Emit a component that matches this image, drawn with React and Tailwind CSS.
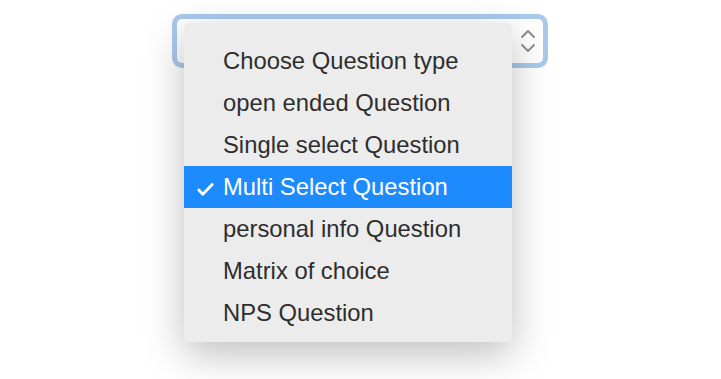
import React from 'react';

const options = [
    'Choose Question type',
    'open ended Question',
    'Single select Question',
    'Multi Select Question',
    'personal info Question',
    'Matrix of choice',
    'NPS Question',
];

export default function App() {
    const selected = 'Multi Select Question';

    return (
        <div className="relative w-[721px] h-[379px] bg-white overflow-hidden" style={{ fontFamily: '"Liberation Sans", Arial, sans-serif' }}>
            {/* Select box with focus ring */}
            <div className="ml-[172px] mt-[14px] w-[376px] h-[54px] rounded-[10px] border-[5px] border-[#a9c9ed] bg-white flex items-center justify-end pr-[7px]">
                <svg width="16" height="26" viewBox="0 0 16 26" fill="none" stroke="#8a8a8a" strokeWidth="1.8" strokeLinecap="round" strokeLinejoin="round">
                    <path d="M2 9 L8 3 L14 9" />
                    <path d="M2 17 L8 23 L14 17" />
                </svg>
            </div>

            {/* Open dropdown menu */}
            <div className="absolute left-[184px] top-[23px] w-[328px] rounded-[5px] bg-[#ececec] pt-[17px] pb-[8px] shadow-[0_12px_40px_rgba(0,0,0,0.26)]">
                {options.map((opt) => {
                    const active = opt === selected;
                    return (
                        <div
                            key={opt}
                            className={`relative h-[42px] flex items-center pl-[39px] text-[23.8px] ${active ? 'bg-[#1d8bfd] text-white' : 'text-[#2e2e2e]'}`}
                        >
                            {active && (
                                <svg className="absolute left-[13px] top-[17px]" width="17" height="13" viewBox="0 0 17 13" fill="none" stroke="white" strokeWidth="2.8" strokeLinecap="round" strokeLinejoin="round">
                                    <path d="M1.8 7 L5.8 11.2 L15.2 1.6" />
                                </svg>
                            )}
                            {opt}
                        </div>
                    );
                })}
            </div>
        </div>
    );
}
